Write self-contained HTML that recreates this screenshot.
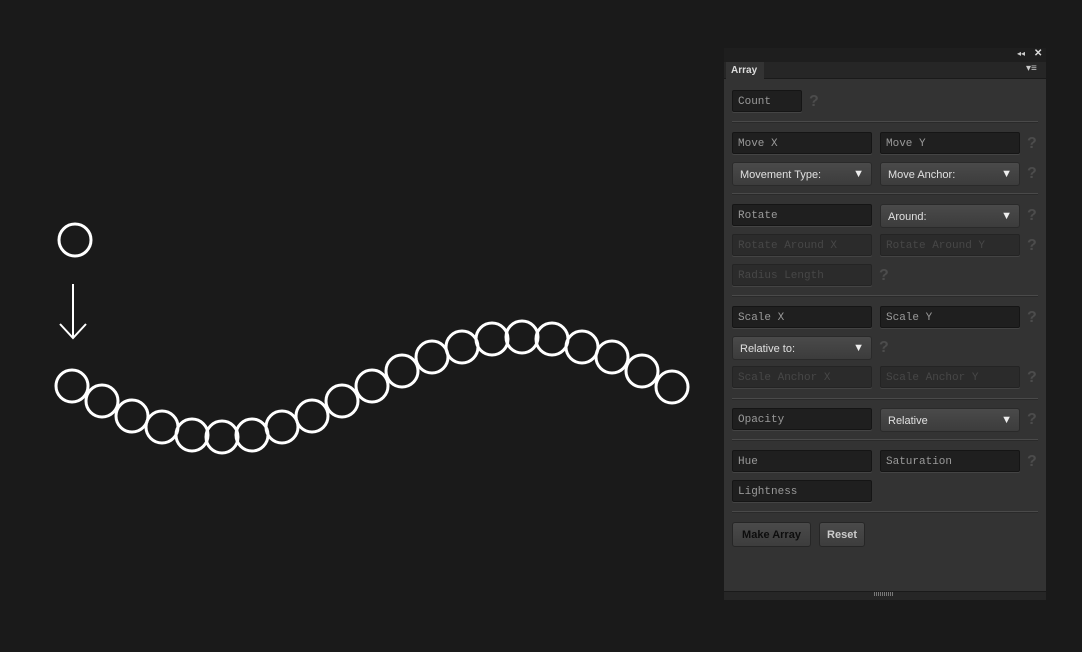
<!DOCTYPE html>
<html><head><style>
body{margin:0;width:1082px;height:652px;background:#1a1a1a;position:relative;overflow:hidden;font-family:"Liberation Sans",sans-serif}
.p{position:absolute;left:724px;top:48px;width:322px;height:551px;background:#333333;}
.a{position:absolute}
.in{position:absolute;box-sizing:border-box;width:140px;height:22px;background:#1f1f1f;border:1px solid #151515;border-radius:2px;font-family:"Liberation Mono",monospace;font-size:11px;color:#9a9a9a;padding:5px 0 0 5px;box-shadow:0 1px 0 #444}
.dis{background:#2b2b2b;color:#474747;border-color:#242424}
.dd{position:absolute;box-sizing:border-box;width:140px;height:24px;background:linear-gradient(#4a4a4a,#3c3c3c);border:1px solid #2a2a2a;border-radius:3px;font-size:11px;color:#e0e0e0;padding:6px 0 0 7px}
.dd:after{content:"▼";position:absolute;right:7px;top:5px;font-size:11px;color:#eee}
.q{position:absolute;font-size:16px;font-weight:bold;color:#4c4c4c}
.sep{position:absolute;left:732px;width:306px;height:1px;background:#4a4a4a;border-bottom:1px solid #2a2a2a}
.btn{position:absolute;box-sizing:border-box;height:25px;background:linear-gradient(#4a4a4a,#3d3d3d);border:1px solid #262626;border-radius:3px;font-size:11px;font-weight:bold;padding:6px 0 0;text-align:center}
</style></head><body>
<svg class="a" style="left:0;top:0" width="720" height="652">
<g fill="none" stroke="#fff" stroke-width="3">
<circle cx="75" cy="240" r="16"/>
<line x1="73" y1="284" x2="73" y2="338" stroke-width="2"/>
<polyline points="60,324 73,338 86,324" stroke-width="2"/>
<circle cx="72" cy="386" r="16"/><circle cx="102" cy="401" r="16"/><circle cx="132" cy="416" r="16"/><circle cx="162" cy="427" r="16"/><circle cx="192" cy="435" r="16"/><circle cx="222" cy="437" r="16"/><circle cx="252" cy="435" r="16"/><circle cx="282" cy="427" r="16"/><circle cx="312" cy="416" r="16"/><circle cx="342" cy="401" r="16"/><circle cx="372" cy="386" r="16"/><circle cx="402" cy="371" r="16"/><circle cx="432" cy="357" r="16"/><circle cx="462" cy="347" r="16"/><circle cx="492" cy="339" r="16"/><circle cx="522" cy="337" r="16"/><circle cx="552" cy="339" r="16"/><circle cx="582" cy="347" r="16"/><circle cx="612" cy="357" r="16"/><circle cx="642" cy="371" r="16"/><circle cx="672" cy="387" r="16"/>
</g></svg>
<div class="p"></div>
<div class="a" style="left:724px;top:48px;width:322px;height:14px;background:#1e1e1e"></div>
<div class="a" style="left:1017px;top:49px;font-size:8px;color:#ccc">◂◂</div>
<div class="a" style="left:1034px;top:48px;font-size:10px;color:#ddd;font-weight:bold">✕</div>
<div class="a" style="left:724px;top:62px;width:322px;height:16px;background:#262626;border-bottom:1px solid #1a1a1a"></div>
<div class="a" style="left:726px;top:62px;width:38px;height:17px;background:#333;font-size:10px;font-weight:bold;color:#ddd;padding:3px 0 0 5px;box-sizing:border-box">Array</div>
<div class="a" style="left:1026px;top:63px;font-size:10px;color:#ccc">▾≡</div>
<div class="in" style="left:732px;top:90px;width:70px">Count</div><div class="q" style="left:809px;top:93px">?</div>
<div class="sep" style="top:121px"></div>
<div class="in" style="left:732px;top:132px">Move X</div><div class="in" style="left:880px;top:132px">Move Y</div><div class="q" style="left:1027px;top:135px">?</div>
<div class="dd" style="left:732px;top:162px">Movement Type:</div><div class="dd" style="left:880px;top:162px">Move Anchor:</div><div class="q" style="left:1027px;top:165px">?</div>
<div class="sep" style="top:193px"></div>
<div class="in" style="left:732px;top:204px">Rotate</div><div class="dd" style="left:880px;top:204px">Around:</div><div class="q" style="left:1027px;top:207px">?</div>
<div class="in dis" style="left:732px;top:234px">Rotate Around X</div><div class="in dis" style="left:880px;top:234px">Rotate Around Y</div><div class="q" style="left:1027px;top:237px">?</div>
<div class="in dis" style="left:732px;top:264px">Radius Length</div><div class="q" style="left:879px;top:267px">?</div>
<div class="sep" style="top:295px"></div>
<div class="in" style="left:732px;top:306px">Scale X</div><div class="in" style="left:880px;top:306px">Scale Y</div><div class="q" style="left:1027px;top:309px">?</div>
<div class="dd" style="left:732px;top:336px">Relative to:</div><div class="q" style="left:879px;top:339px">?</div>
<div class="in dis" style="left:732px;top:366px">Scale Anchor X</div><div class="in dis" style="left:880px;top:366px">Scale Anchor Y</div><div class="q" style="left:1027px;top:369px">?</div>
<div class="sep" style="top:398px"></div>
<div class="in" style="left:732px;top:408px">Opacity</div><div class="dd" style="left:880px;top:408px">Relative</div><div class="q" style="left:1027px;top:411px">?</div>
<div class="sep" style="top:439px"></div>
<div class="in" style="left:732px;top:450px">Hue</div><div class="in" style="left:880px;top:450px">Saturation</div><div class="q" style="left:1027px;top:453px">?</div>
<div class="in" style="left:732px;top:480px">Lightness</div>
<div class="sep" style="top:511px"></div>
<div class="btn" style="left:732px;top:522px;width:79px;color:#0d0d0d">Make Array</div>
<div class="btn" style="left:819px;top:522px;width:46px;color:#ccc">Reset</div>
<div class="a" style="left:724px;top:591px;width:322px;height:8px;background:#262626;border-top:1px solid #1a1a1a"></div>
<div class="a" style="left:874px;top:592px;width:20px;height:4px;background:repeating-linear-gradient(90deg,#777 0 1px,transparent 1px 2px)"></div>
</body></html>
